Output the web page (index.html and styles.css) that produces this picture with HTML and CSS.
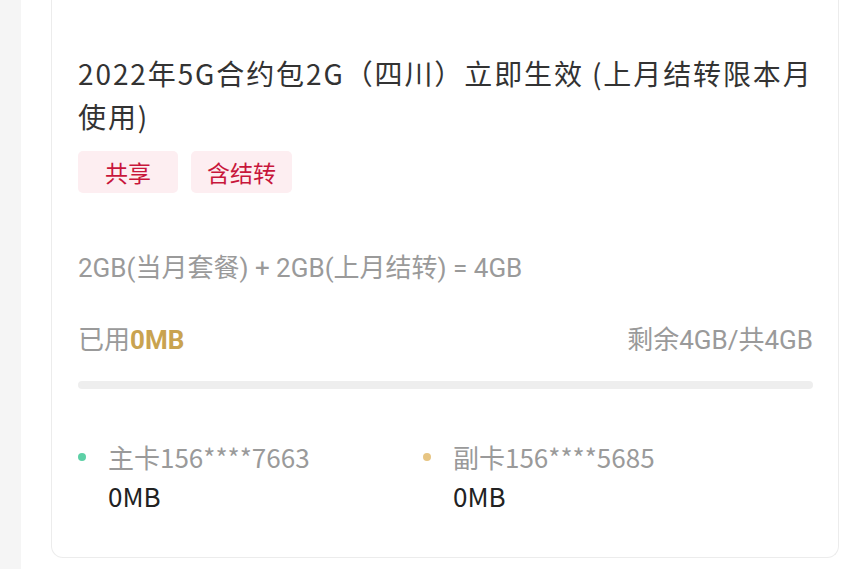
FILE: index.html
```html
<!DOCTYPE html>
<html lang="zh-CN">
<head>
  <meta charset="UTF-8">
  <title>流量包详情</title>
  <link rel="stylesheet" href="styles.css">
</head>
<body>

<div class="page">
  <div class="side"></div>

  <div class="main">
    <div class="card">
      <h2 class="pkg-title">2022年5G合约包2G（四川）立即生效 (上月结转限本月使用)</h2>

      <div class="tags">
        <span class="tag">共享</span>
        <span class="tag">含结转</span>
      </div>

      <p class="formula">2GB(当月套餐) + 2GB(上月结转) = 4GB</p>

      <div class="usage">
        <span>已用<b class="used">0MB</b></span>
        <span>剩余4GB/共4GB</span>
      </div>
      <div class="bar"><div class="bar-fill" style="width: 0%"></div></div>

      <div class="members">
        <div class="member">
          <div class="member-name"><i class="dot dot-main"></i>主卡156****7663</div>
          <div class="member-val">0MB</div>
        </div>
        <div class="member">
          <div class="member-name"><i class="dot dot-sub"></i>副卡156****5685</div>
          <div class="member-val">0MB</div>
        </div>
      </div>
    </div>
  </div>
</div>

</body>
</html>
```

FILE: styles.css
```css
body {
  margin: 0;
  background-color: #fff;
  font-family: Roboto, "Noto Sans CJK SC", sans-serif;
  color: #333;
}
.page {
  display: flex;
  min-height: 569px;
}
.side {
  width: 21px;
  background-color: #f5f5f5;
  flex-shrink: 0;
}
.main {
  flex: 1;
  padding: 0 11px 0 30px;
}
.card {
  background-color: #fff;
  border: 1px solid #ececec;
  border-top: 0;
  border-radius: 0 0 12px 12px;
  padding: 52px 25px 42px 26px;
}
.pkg-title {
  margin: 0;
  font-family: "Noto Sans CJK SC", sans-serif;
  font-size: 28px;
  font-weight: normal;
  letter-spacing: 1.9px;
  line-height: 43px;
  color: #333;
}
.tags {
  display: flex;
  gap: 13px;
  margin-top: 13px;
}
.tag {
  min-width: 100px;
  box-sizing: border-box;
  height: 42px;
  line-height: 42px;
  padding: 0 16px;
  text-align: center;
  font-family: "Noto Sans CJK SC", sans-serif;
  font-size: 23px;
  color: #c8163b;
  background-color: #fdeef1;
  border-radius: 5px;
}
.formula {
  margin: 58px 0 0;
  font-size: 26px;
  line-height: 34px;
  color: #9a9a9a;
}
.usage {
  display: flex;
  justify-content: space-between;
  margin-top: 38px;
  font-size: 26px;
  line-height: 34px;
  color: #9a9a9a;
}
.used {
  color: #c9a350;
  font-weight: bold;
}
.bar {
  margin-top: 24px;
  height: 8px;
  border-radius: 4px;
  background-color: #eeeeee;
  overflow: hidden;
}
.bar-fill {
  height: 100%;
  background-color: #c9a350;
}
.members {
  display: grid;
  grid-template-columns: 345px 1fr;
  margin-top: 47px;
}
.member-name {
  display: flex;
  align-items: center;
  font-family: "Noto Sans CJK SC", sans-serif;
  font-size: 26px;
  line-height: 41px;
  color: #9a9a9a;
}
.dot {
  width: 8px;
  height: 8px;
  border-radius: 50%;
  margin: 0 22px 0 0;
}
.dot-main {
  background-color: #5dd0a6;
}
.dot-sub {
  background-color: #e7c583;
}
.member-val {
  padding-left: 30px;
  font-family: "Noto Sans CJK SC", sans-serif;
  font-size: 26px;
  line-height: 38px;
  color: #222;
}
```
